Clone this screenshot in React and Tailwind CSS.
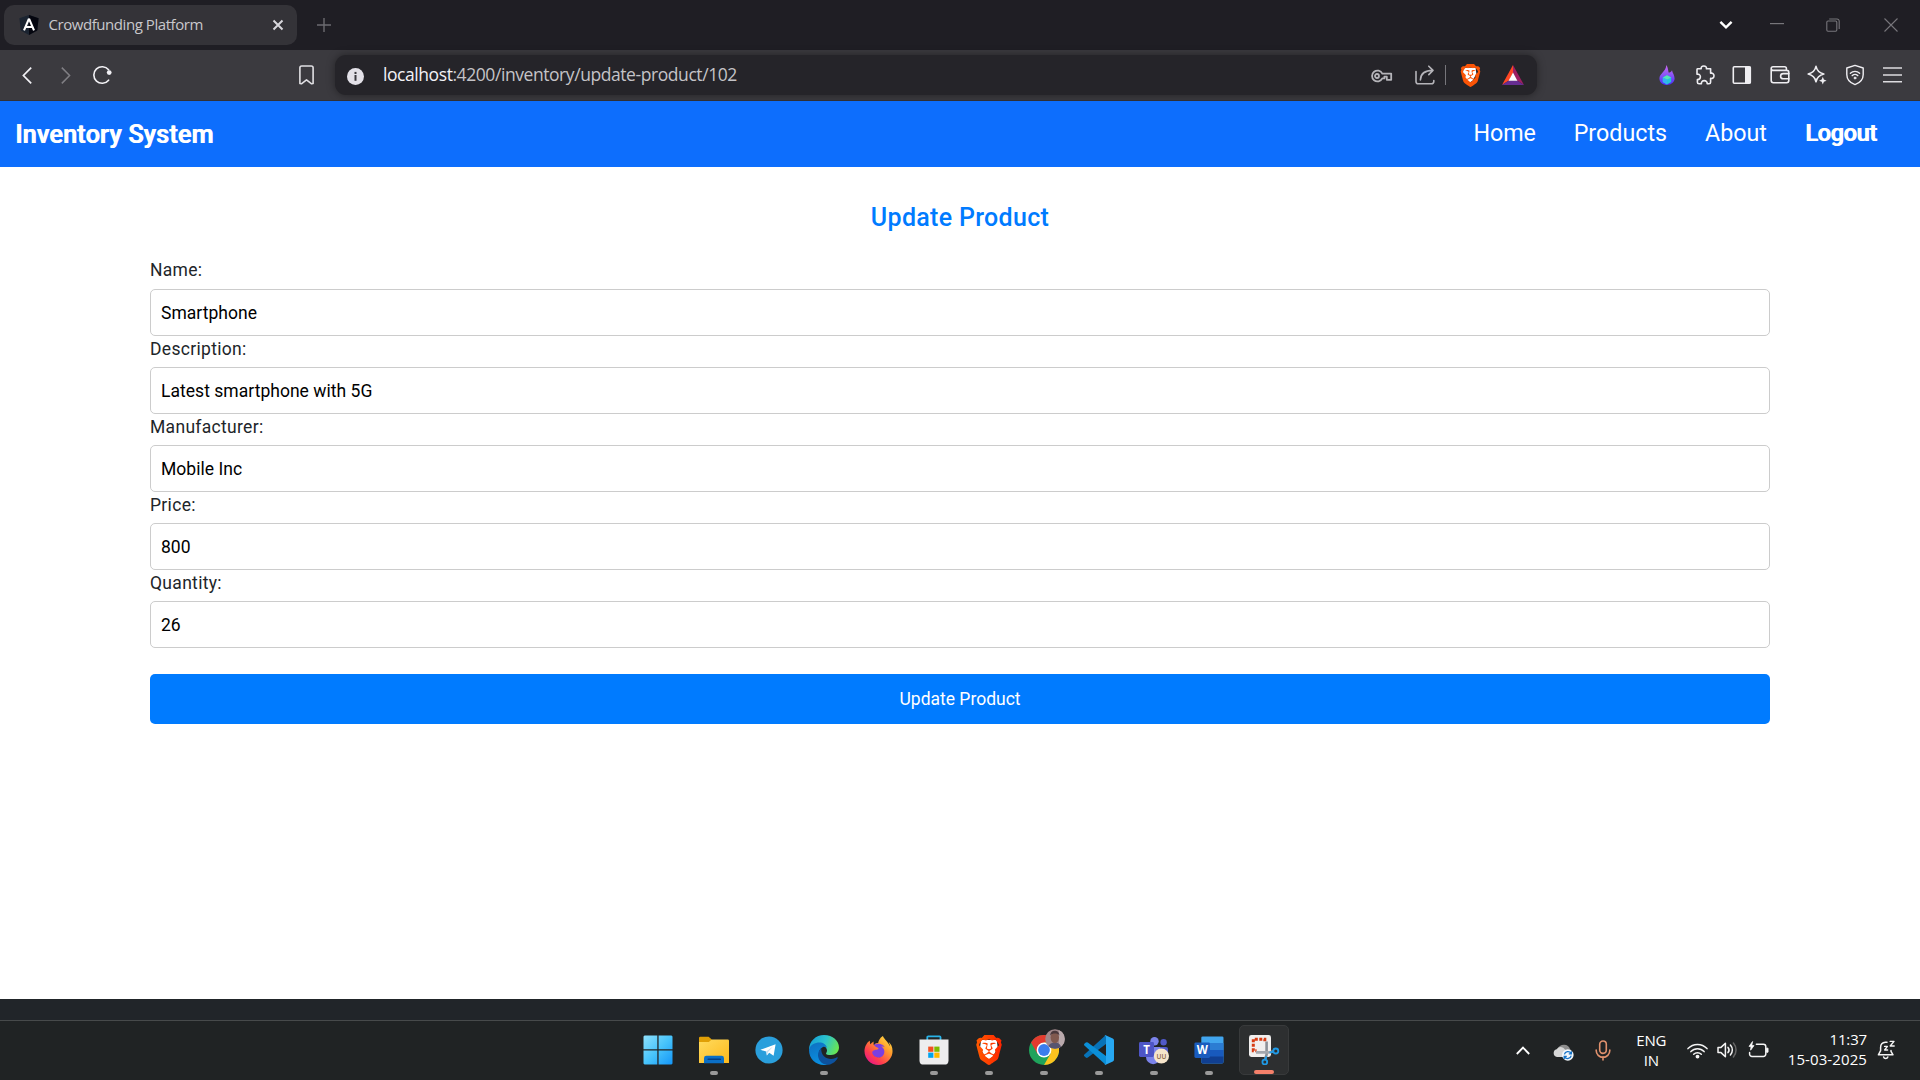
import React from "react";
import { SiBrave, SiFirefoxbrowser } from "react-icons/si";

const FIELDS = [
  { id: "name", label: "Name:", value: "Smartphone" },
  { id: "description", label: "Description:", value: "Latest smartphone with 5G" },
  { id: "manufacturer", label: "Manufacturer:", value: "Mobile Inc" },
  { id: "price", label: "Price:", value: "800" },
  { id: "quantity", label: "Quantity:", value: "26" },
];

/* ---------- Browser chrome ---------- */

function AngularMark() {
  return (
    <svg width="20" height="20" viewBox="0 0 20 20">
      <path d="M10 0 19.6 3.2 18.2 15.6 10 20 1.8 15.6 0.4 3.2Z" fill="#1b2431" />
      <path d="M10 0 19.6 3.2 18.2 15.6 10 20Z" fill="#05060f" />
      <path d="M10 3.6 5 15.4M10 3.6 15 15.4M6.6 12h6.8" stroke="#fff" strokeWidth="2.1" fill="none" />
    </svg>
  );
}

function TabStrip() {
  return (
    <div className="flex h-[50px] items-center bg-[#1f1e24] pl-1">
      <div className="flex h-10 w-[293px] items-center rounded-[10px] bg-[#343338] pl-[15px] pr-[13px]">
        <AngularMark />
        <span className="ml-[9.5px] mt-[-2px] flex-1 whitespace-nowrap font-['Open_Sans',sans-serif] text-[15px] leading-5 tracking-[-0.44px] text-[#c9c8cc]">
          Crowdfunding Platform
        </span>
        <svg width="12" height="12" viewBox="0 0 12 12" stroke="#d8d7dc" strokeWidth="2" fill="none">
          <path d="M1.5 1.5 10.5 10.5M10.5 1.5 1.5 10.5" />
        </svg>
      </div>
      <svg className="ml-5" width="14" height="14" viewBox="0 0 14 14" stroke="#6c6b70" strokeWidth="1.4">
        <path d="M7 0V14M0 7H14" />
      </svg>
      <div className="ml-auto flex items-center">
        <svg className="mr-[37px]" width="14" height="10" viewBox="0 0 14 10" fill="none" stroke="#fff" strokeWidth="2.4">
          <path d="M1.4 1.8 7 7.4 12.6 1.8" />
        </svg>
        <svg className="mr-[42px]" width="14" height="14" viewBox="0 0 14 14" stroke="#77767b" strokeWidth="1.2">
          <path d="M0 5.6H14" />
        </svg>
        <svg className="mr-[44px]" width="14" height="14" viewBox="0 0 14 14" fill="none" stroke="#77767b" strokeWidth="1.1">
          <rect x="0.8" y="3" width="10" height="10.2" rx="1.2" />
          <path d="M3.2 1H11a2.2 2.2 0 0 1 2.2 2.2V11" />
        </svg>
        <svg className="mr-[22px]" width="14" height="14" viewBox="0 0 14 14" stroke="#77767b" strokeWidth="1.1">
          <path d="M0.5 0.5 13.5 13.5M13.5 0.5 0.5 13.5" />
        </svg>
      </div>
    </div>
  );
}

function BraveLion({ size, gradient }) {
  return (
    <div className="relative flex items-center justify-center">
      <svg className="absolute" width={size * 0.66} height={size * 0.72} viewBox="0 0 20 22">
        <path d="M2 1H18L19 9 14 18 10 21 6 18 1 9Z" fill="#fff" />
      </svg>
      <svg className="absolute" width="0" height="0">
        <defs>
          <linearGradient id="brave-fill" x1="0" x2="1" y1="0" y2="0">
            <stop offset="0" stopColor="#ff5a00" />
            <stop offset="1" stopColor="#ff2400" />
          </linearGradient>
        </defs>
      </svg>
      <SiBrave size={size} className="relative" fill={gradient ? "url(#brave-fill)" : "#fb5406"} />
    </div>
  );
}

function AddressBar() {
  return (
    <div className="flex h-10 w-[1202px] items-center rounded-[11px] bg-[#252429] pl-3 pr-[13px] shadow-[0_0_8px_rgba(0,0,0,0.4)]">
      <svg className="mt-0.5" width="17" height="17" viewBox="0 0 17 17">
        <circle cx="8.5" cy="8.5" r="8.5" fill="#e3e1e8" />
        <rect x="7.5" y="3.9" width="2" height="2.1" fill="#3a393e" />
        <rect x="7.5" y="7" width="2" height="5.8" fill="#3a393e" />
      </svg>
      <span className="ml-[19px] mt-[-2px] whitespace-nowrap font-['Open_Sans',sans-serif] text-[17.5px] leading-6 tracking-[-0.43px] text-[#c4c3c7]">
        <span className="text-[#f3f2f6]">localhost</span>:4200/inventory/update-product/102
      </span>
      <svg className="ml-auto mt-[1px]" width="22" height="14" viewBox="0 0 22 14" fill="none" stroke="#b5b4b9" strokeWidth="1.8">
        <path d="M11.3 4.6A5.4 5.4 0 1 0 11.3 9.4H13.4V7.6H15.8V10.8H20.2V4.6Z" strokeLinejoin="round" />
        <circle cx="6" cy="7" r="2" />
      </svg>
      <svg className="ml-[22px]" width="20" height="20" viewBox="0 0 20 20" fill="none" stroke="#b5b4b9" strokeWidth="1.6" strokeLinecap="round" strokeLinejoin="round">
        <path d="M1 6.5V16.5a2.3 2.3 0 0 0 2.3 2.3H16.6a2.2 2.2 0 0 0 2.2-2.2V15.6" />
        <path d="M5.4 15C5.6 8.6 10 5.4 18 5.4M13.8 1.2 18 5.4 13.8 9.6" />
      </svg>
      <div className="ml-[10px] h-5 w-px bg-[#77767b]" />
      <div className="ml-[12px] flex w-6 justify-center">
        <BraveLion size={23} />
      </div>
      <svg className="ml-[20px]" width="22" height="20" viewBox="0 0 22 20">
        <path d="M11 0 0 20 7.2 15.2 11 8Z" fill="#ff4724" />
        <path d="M11 0 22 20 14.8 15.2 11 8Z" fill="#9e1f63" />
        <path d="M0 20H22L14.8 15.2H7.2Z" fill="#662d91" />
        <path d="M11 7.4 15.4 15.8H6.6Z" fill="#fff" />
      </svg>
    </div>
  );
}

function ExtensionIcons() {
  const line = { fill: "none", stroke: "#efeef2", strokeWidth: 1.6, strokeLinecap: "round", strokeLinejoin: "round" };
  const cell = "flex w-[37.5px] justify-center";
  return (
    <div className="ml-auto mr-[9px] flex items-center">
      <div className={cell}>
        <svg width="16" height="20" viewBox="0 0 16 20">
          <defs>
            <linearGradient id="flame" x1="0" x2="0" y1="0" y2="1">
              <stop offset="0" stopColor="#cc66f2" />
              <stop offset="0.5" stopColor="#8a55f6" />
              <stop offset="1" stopColor="#4b2cf5" />
            </linearGradient>
          </defs>
          <path d="M7.4 0C8.6 2 9 3.6 9.6 7.6 11 7.5 12.4 6.6 13 5.2 13.4 7.8 15.6 10 15.6 13.6 15.6 17.2 12.2 20 8 20S0.4 17.2 0.4 13.4C0.4 8.8 6.6 7 7.4 0Z" fill="url(#flame)" />
          <path d="M8 10.2 12.2 12.4V17L8 19.4 3.8 17V12.4Z" fill="#25c4d8" />
          <path d="M8 10.2 12.2 12.4 8 14.6 3.8 12.4Z" fill="#55e6b4" />
          <path d="M8 14.6V19.4L3.8 17V12.4Z" fill="#35b1f4" />
        </svg>
      </div>
      <div className={cell}>
        <svg width="20" height="20" viewBox="0 0 20 20" {...line}>
          <path d="M2.4 3.8H6.2C5.8 2.2 6.9 1 8.8 1S11.8 2.2 11.4 3.8H15.6V8.2C17.4 7.8 19 8.8 19 10.8S17.4 13.8 15.6 13.4V17.2Q15.6 18.8 14 18.8H12.2C12.4 16.8 11 15.6 9.2 15.6S6.2 16.8 6.4 18.8H4Q2.4 18.8 2.4 17.2V14.6C4.4 14.6 5.4 13.4 5.4 11.8S4.2 8.8 2 9.2V4.6Q2 3.8 2.4 3.8Z" />
        </svg>
      </div>
      <div className={cell}>
        <svg width="20" height="20" viewBox="0 0 20 20">
          <rect x="1.3" y="1.8" width="17" height="16.4" rx="1" {...line} />
          <rect x="13" y="1.8" width="6" height="16.4" fill="#efeef2" />
        </svg>
      </div>
      <div className={cell}>
        <svg width="20" height="20" viewBox="0 0 20 20" {...line}>
          <path d="M1.2 3.4V15.6A2.2 2.2 0 0 0 3.4 17.8H16.6A2.2 2.2 0 0 0 18.8 15.6V7.4A2 2 0 0 0 16.8 5.4H3A1.8 1.8 0 0 1 3 1.8H14.6A1.8 1.8 0 0 1 16.4 3.6V5.4" />
          <path d="M18.8 8.6H13.2A2.6 2.6 0 0 0 13.2 13.8H18.8" />
        </svg>
      </div>
      <div className={cell}>
        <svg width="20" height="20" viewBox="0 0 20 20" {...line}>
          <path d="M9 1.4C9.9 5.6 12 7.9 16.8 9 12 10.1 9.9 12.4 9 16.8 8.1 12.4 6 10.1 1.2 9 6 7.9 8.1 5.6 9 1.4Z" />
          <path d="M15.8 11.8 16.9 14.6 19.6 15.7 16.9 16.8 15.8 19.6 14.7 16.8 12 15.7 14.7 14.6Z" fill="#efeef2" stroke="none" />
        </svg>
      </div>
      <div className={cell}>
        <svg width="20" height="22" viewBox="0 0 20 22" {...line} strokeWidth="1.4">
          <path d="M10 1.4 18.2 4V10.4C18.2 15.8 14.8 18.8 10 20.6 5.2 18.8 1.8 15.8 1.8 10.4V4Z" />
          <path d="M5.4 9.2C8 6.8 12 6.8 14.6 9.2M7.2 11.6C8.8 10.2 11.2 10.2 12.8 11.6" />
          <circle cx="10" cy="14" r="1" fill="#efeef2" strokeWidth="0.8" />
        </svg>
      </div>
      <div className={cell}>
        <svg width="19" height="16" viewBox="0 0 19 16" stroke="#dddce0" strokeWidth="1.6">
          <path d="M0 1H19M0 8H19M0 14.8H19" />
        </svg>
      </div>
    </div>
  );
}

function Toolbar() {
  return (
    <div className="flex h-[51px] items-center border-b border-[#323136] bg-[#3b3a3f] pl-[22px]">
      <svg width="10" height="17" viewBox="0 0 10 17" fill="none" stroke="#f1f0f4" strokeWidth="1.7">
        <path d="M9.2 0.6 1.4 8.5 9.2 16.4" />
      </svg>
      <svg className="ml-[29px]" width="10" height="17" viewBox="0 0 10 17" fill="none" stroke="#807f84" strokeWidth="1.5">
        <path d="M0.8 0.6 8.6 8.5 0.8 16.4" />
      </svg>
      <svg className="ml-[21px]" width="20" height="20" viewBox="0 0 20 20" fill="none" stroke="#f1f0f4" strokeWidth="1.6" strokeLinecap="round">
        <path d="M16.6 4.8A8.3 8.3 0 1 0 16.6 15.2" />
        <circle cx="17.2" cy="7.6" r="2.4" fill="#f1f0f4" stroke="none" />
      </svg>
      <svg className="ml-[187px]" width="15" height="20" viewBox="0 0 15 20" fill="none" stroke="#e0dfe3" strokeWidth="1.6" strokeLinejoin="round">
        <path d="M0.9 18.4V2.8A1.8 1.8 0 0 1 2.7 1H12.3A1.8 1.8 0 0 1 14.1 2.8V18.4L12.6 18.8 7.5 14.8 2.4 18.8Z" />
      </svg>
      <div className="ml-[21px] flex">
        <AddressBar />
      </div>
      <ExtensionIcons />
    </div>
  );
}

/* ---------- Web page ---------- */

function Navbar() {
  return (
    <nav className="flex h-[66px] items-center bg-[#0d6efd] pl-[15px] pr-[43.5px] text-[23.25px] text-white">
      <span className="mt-[2px] text-[25px] font-medium leading-8 tracking-[0.26px] [text-shadow:1px_0_0_#fff]">Inventory System</span>
      <div className="ml-auto flex items-center gap-[38px] pb-[1px]">
        <a className="tracking-[-0.1px]">Home</a>
        <a>Products</a>
        <a>About</a>
        <a className="font-medium tracking-[-0.2px] [text-shadow:1px_0_0_#fff]">Logout</a>
      </div>
    </nav>
  );
}

function ProductForm() {
  return (
    <main className="flex h-[832px] flex-col bg-white px-[150px] pt-[31px]">
      <h2 className="h-[40px] text-center text-[25px] font-medium leading-[40px] tracking-[0.31px] text-[#007bff]">Update Product</h2>
      <form className="mt-[19.4px] flex flex-col">
        {FIELDS.map((field) => (
          <div key={field.id} className="flex h-[78.2px] flex-col">
            <label htmlFor={field.id} className="h-[31.3px] text-[17.5px] leading-[26px] tracking-[0.31px] text-[#212529]">
              {field.label}
            </label>
            <input
              id={field.id}
              defaultValue={field.value}
              className="h-[47px] w-full shrink-0 rounded-[5px] border border-[#ccc] bg-white px-[10px] pt-[1px] text-[17.5px] tracking-[0.03px] text-black outline-none"
            />
          </div>
        ))}
        <button type="button" className="mt-[25.6px] h-[50px] rounded-[5px] bg-[#007bff] text-[17.5px] text-white">
          Update Product
        </button>
      </form>
    </main>
  );
}

/* ---------- Taskbar ---------- */

function WindowsIcon() {
  return (
    <svg width="30" height="30" viewBox="0 0 30 30">
      <defs>
        <linearGradient id="win" x1="0" y1="0" x2="1" y2="1" gradientUnits="objectBoundingBox">
          <stop offset="0" stopColor="#8fe0fb" />
          <stop offset="0.5" stopColor="#48c4fb" />
          <stop offset="1" stopColor="#1496f8" />
        </linearGradient>
      </defs>
      <path d="M1.5 0.5H14.3V14.3H0.5V1.5ZM15.6 0.5H28.5L29.5 1.5V14.3H15.6ZM0.5 15.6H14.3V29.5H1.5L0.5 28.5ZM15.6 15.6H29.5V28.5L28.5 29.5H15.6Z" fill="url(#win)" />
    </svg>
  );
}

function FolderIcon() {
  return (
    <svg width="30" height="30" viewBox="0 0 30 30">
      <defs>
        <linearGradient id="folder" x1="0" y1="0" x2="1" y2="1">
          <stop offset="0" stopColor="#ffdb5e" />
          <stop offset="1" stopColor="#fdb91c" />
        </linearGradient>
      </defs>
      <path d="M0 3Q0 1.8 1.2 1.8H9.6L12.8 4.6V9H0Z" fill="#e09f06" />
      <path d="M0 7H9.8L12.8 4.6H28.8Q30 4.6 30 5.8V28H0Z" fill="url(#folder)" />
      <path d="M5 28.2V23.2Q5 20.8 7.4 20.8H22.6Q25 20.8 25 23.2V28.2Z" fill="#0b6fc6" />
      <rect x="8.5" y="23.6" width="13.5" height="1.5" rx="0.7" fill="#053f83" />
    </svg>
  );
}

function TelegramIcon() {
  return (
    <svg width="28" height="28" viewBox="0 0 28 28">
      <circle cx="14" cy="14" r="13.6" fill="#2a9fdc" />
      <path d="M5.4 13.8 20.6 8.3 18.6 19.8 14.2 16.8 11.9 19.6 11.2 15.6Z" fill="#fff" />
      <path d="M11.2 15.6 18 10.6 12.9 16.3 11.9 19.6Z" fill="#c5dff0" />
    </svg>
  );
}

function EdgeIcon() {
  return (
    <svg width="30" height="30" viewBox="0 0 30 30">
      <defs>
        <linearGradient id="edge-top" x1="0" y1="0.3" x2="1" y2="0.6">
          <stop offset="0" stopColor="#149fd8" />
          <stop offset="0.5" stopColor="#2cc3cc" />
          <stop offset="1" stopColor="#6be64f" />
        </linearGradient>
        <linearGradient id="edge-left" x1="0" y1="0" x2="0.4" y2="1">
          <stop offset="0" stopColor="#0f6fc0" />
          <stop offset="1" stopColor="#0a8fe0" />
        </linearGradient>
      </defs>
      <path d="M0 15C0 6 7 0 15 0 24 0 30 6 30 12.5 30 17 26.5 20 22 20 19 20 17 19.3 17 18.4 17 18 18 17.2 18 15.5 18 12.5 15 10 11 10 6 10 1.5 12.5 0 15" fill="url(#edge-top)" />
      <path d="M0 15C1 9.5 6 7.5 10.5 7.5 14 7.5 17.5 9.5 18 13 17 12 15.5 11.5 14 12 10.5 13.5 10 17 10 19 10 25 15 29.5 19 29.5 17.8 29.9 16.4 30 15 30 6.5 30 0 23.5 0 15" fill="url(#edge-left)" />
      <path d="M12.3 13.2C11.6 20 17 24 22 24 25 24 27 23 28 22.3 28.6 22 29 22.5 28.6 23.2 26 27.5 22 30 17.5 29.8 12 29 9 24 9 20 9 17 10.5 14.5 12.3 13.2" fill="#0d529e" />
    </svg>
  );
}

function FirefoxIcon() {
  return (
    <div className="relative flex items-center justify-center">
      <svg className="absolute" width="0" height="0">
        <defs>
          <linearGradient id="fox" x1="1" y1="0" x2="0.2" y2="1">
            <stop offset="0" stopColor="#fff04a" />
            <stop offset="0.4" stopColor="#ff9a2c" />
            <stop offset="0.75" stopColor="#ff3d4e" />
            <stop offset="1" stopColor="#e6148a" />
          </linearGradient>
        </defs>
      </svg>
      <div className="absolute h-[15px] w-[15px] rounded-full bg-[#7b3fe0]" />
      <SiFirefoxbrowser size={29} className="relative" fill="url(#fox)" />
    </div>
  );
}

function StoreIcon() {
  return (
    <svg width="30" height="30" viewBox="0 0 30 30">
      <path d="M8.3 5.5V2.2Q8.3 1.3 9.2 1.3H20.6Q21.5 1.3 21.5 2.2V5.5" fill="none" stroke="#29b3e8" strokeWidth="1.8" />
      <path d="M0.5 4.6H29.5V25.4Q29.5 29.6 25.3 29.6H4.7Q0.5 29.6 0.5 25.4Z" fill="#ededee" />
      <rect x="9.2" y="11.6" width="5.2" height="5.2" fill="#f25022" />
      <rect x="15.3" y="11.6" width="5.2" height="5.2" fill="#7fba00" />
      <rect x="9.2" y="17.6" width="5.2" height="5.2" fill="#00a4ef" />
      <rect x="15.3" y="17.6" width="5.2" height="5.2" fill="#ffb900" />
    </svg>
  );
}

function ChromeIcon() {
  return (
    <div className="relative">
      <svg className="block" width="30" height="30" viewBox="0 0 30 30">
        <circle cx="15" cy="15" r="15" fill="#1fa35b" />
        <path d="M15 15 2 7.5A15 15 0 0 1 28 7.5H15Z" fill="#e33b2e" />
        <path d="M15 7.5H28A15 15 0 0 1 15 30L21.5 18.7Z" fill="#fcc31e" />
        <path d="M2 7.5 8.5 18.8 15 15 15 7.5Z" fill="#e33b2e" />
        <circle cx="15" cy="15" r="7.4" fill="#fff" />
        <circle cx="15" cy="15" r="5.9" fill="#3b7ded" />
      </svg>
      <svg className="absolute -top-[6px] left-[16px]" width="20" height="20" viewBox="0 0 20 20">
        <defs>
          <clipPath id="avatar">
            <circle cx="10" cy="10" r="9.8" />
          </clipPath>
        </defs>
        <g clipPath="url(#avatar)">
          <rect width="20" height="20" fill="#a0878a" />
          <rect x="14" width="6" height="20" fill="#b9a9ac" />
          <path d="M3 20C3 14.6 7 13.4 10 13.4S16 15 16.5 20Z" fill="#565470" />
          <ellipse cx="9.8" cy="8.6" rx="4.2" ry="5.6" fill="#80594f" />
          <path d="M5.2 6.4C5.4 3 7.5 1.8 9.8 1.8S14.2 3 14.4 6.4C12.5 4 7.5 4 5.2 6.4Z" fill="#4a393d" />
        </g>
      </svg>
    </div>
  );
}

function CodeIcon() {
  return (
    <svg width="30" height="30" viewBox="0 0 30 30">
      <path d="M21.6 0.3 24 2.6 22 9 3.8 22.6Q2.8 23.4 1.8 22.6L0.4 21.3Q-0.5 20.4 0.4 19.5Z" fill="#0873b8" />
      <path d="M0.4 8.8 1.8 7.5Q2.8 6.8 3.8 7.5L22 21 24 27 21.6 29.7 0.4 10.6Q-0.4 9.7 0.4 8.8Z" fill="#0b8fd8" />
      <path d="M21.6 0.2 28.8 3.4Q30 4 30 5.4V24.6Q30 26 28.8 26.6L21.6 29.8Q20.8 30 20.4 29.4 22 29.6 22 27.8V2.2Q22 0.6 20.4 0.6 20.8 0 21.6 0.2Z" fill="#27a8f2" />
    </svg>
  );
}

function TeamsIcon() {
  return (
    <svg width="32" height="30" viewBox="0 0 32 30">
      <circle cx="16.5" cy="6.2" r="4.2" fill="#7b83eb" />
      <circle cx="25.6" cy="7.2" r="3.2" fill="#5059c9" />
      <rect x="21" y="12" width="9" height="12" rx="2" fill="#5059c9" />
      <path d="M8 12H22.4V22A7.2 7.2 0 0 1 8 22Z" fill="#7b83eb" />
      <rect x="1" y="7" width="15" height="15" rx="1.4" fill="#4e55c6" />
      <text x="8.5" y="18.6" textAnchor="middle" fontSize="11.5" fontWeight="700" fill="#fff" className="font-['Open_Sans',sans-serif]">T</text>
      <circle cx="23.4" cy="21" r="7.6" fill="#f6e5cb" />
      <text x="23.4" y="23.6" textAnchor="middle" fontSize="6.5" fontWeight="600" fill="#8a6444" className="font-['Open_Sans',sans-serif]">UU</text>
    </svg>
  );
}

function WordIcon() {
  return (
    <svg width="30" height="30" viewBox="0 0 30 30">
      <rect x="7.3" y="1.4" width="22.2" height="27" rx="1.4" fill="#41a5ee" />
      <rect x="7.3" y="8" width="22.2" height="7" fill="#2b7cd3" />
      <rect x="7.3" y="15" width="22.2" height="7" fill="#185abd" />
      <path d="M7.3 21.6H29.5V27Q29.5 28.4 28.1 28.4H8.7Q7.3 28.4 7.3 27Z" fill="#103f91" />
      <rect x="0.4" y="7.4" width="15.6" height="15.6" rx="1.4" fill="#1a5cbe" />
      <text x="8.2" y="19.2" textAnchor="middle" fontSize="11.5" fontWeight="700" fill="#fff" className="font-['Open_Sans',sans-serif]">W</text>
    </svg>
  );
}

function SnippingIcon() {
  return (
    <svg width="32" height="30" viewBox="0 0 32 30">
      <rect x="1" y="0" width="22" height="22" rx="2.4" fill="#f1efee" />
      <path d="M16.8 6.3V4.3H5.3V15.8H8.6" fill="none" stroke="#d83b12" strokeWidth="3" strokeDasharray="3 1.5" />
      <path d="M18.6 6.5V19.6L17.2 24" fill="none" stroke="#8b9097" strokeWidth="2.6" />
      <path d="M8 17.4H20.6L25.6 16.4" fill="none" stroke="#a4a8ae" strokeWidth="2.6" />
      <circle cx="27.8" cy="16" r="2.5" fill="none" stroke="#1f9ae6" strokeWidth="1.8" />
      <circle cx="16.8" cy="27" r="2.4" fill="none" stroke="#1f9ae6" strokeWidth="1.8" />
      <path d="M21.6 17.6 25.6 16.4M18.4 21.4 17.4 24.4" stroke="#1f9ae6" strokeWidth="1.8" />
    </svg>
  );
}

const APPS = [
  { name: "explorer", icon: <FolderIcon />, open: true },
  { name: "telegram", icon: <TelegramIcon />, open: false },
  { name: "edge", icon: <EdgeIcon />, open: true },
  { name: "firefox", icon: <FirefoxIcon />, open: false },
  { name: "store", icon: <StoreIcon />, open: true },
  { name: "brave", icon: <BraveLion size={30} gradient />, open: true },
  { name: "chrome", icon: <ChromeIcon />, open: true },
  { name: "code", icon: <CodeIcon />, open: true },
  { name: "teams", icon: <TeamsIcon />, open: true },
  { name: "word", icon: <WordIcon />, open: true },
];

function Tray() {
  const line = { fill: "none", stroke: "#f4f4f4", strokeWidth: 1.5, strokeLinecap: "round", strokeLinejoin: "round" };
  return (
    <div className="ml-auto flex items-center pr-[24.5px] font-['Open_Sans',sans-serif] text-[15px] leading-5 text-white">
      <svg width="14" height="9" viewBox="0 0 14 9" fill="none" stroke="#fff" strokeWidth="1.8">
        <path d="M0.8 8 7 1.6 13.2 8" />
      </svg>
      <svg className="ml-[23px] mt-1" width="21" height="18" viewBox="0 0 21 18">
        <path d="M5 5.4A6.4 6 0 0 1 17 6 4 4 0 0 1 16 13H8Z" fill="#8d8d8d" />
        <path d="M4 14A4 4 0 0 1 3.6 6.2 5 5 0 0 1 12 6.4L15 9.4 12 14Z" fill="#d6d6d6" />
        <circle cx="14.8" cy="12" r="5.8" fill="#f2f7fb" />
        <path d="M11.4 11.4A3.6 3.6 0 0 1 18 10.4M18.2 12.6A3.6 3.6 0 0 1 11.6 13.8M18.4 8.2V10.8H15.8M11.2 16V13.3H13.8" fill="none" stroke="#1573c8" strokeWidth="1.3" />
      </svg>
      <svg className="ml-[21.5px]" width="16" height="21" viewBox="0 0 16 21" fill="none" stroke="#e0916d" strokeWidth="1.6" strokeLinecap="round">
        <rect x="4.7" y="1" width="6.6" height="12.4" rx="3.3" />
        <path d="M1.2 10V10.6A6.2 6.2 0 0 0 14.8 10.6V10M8 16.8V20" />
      </svg>
      <div className="ml-[24px] mt-[-1px] flex w-[32px] flex-col items-center tracking-[-0.2px]">
        <span>ENG</span>
        <span>IN</span>
      </div>
      <svg className="ml-[20px]" width="21" height="17" viewBox="0 0 21 17" {...line}>
        <path d="M1 6.6A13.2 13.2 0 0 1 20 6.6M3.9 9.6A9 9 0 0 1 17.1 9.6M6.7 12.3A5.2 5.2 0 0 1 14.3 12.3" />
        <circle cx="10.5" cy="14.6" r="1.2" fill="#fff" />
      </svg>
      <svg className="ml-[9px]" width="21" height="18" viewBox="0 0 21 18" {...line}>
        <path d="M1 6.4H4L8.4 2.2V15.8L4 11.6H1Z" />
        <path d="M11 6.4A4 4 0 0 1 11 11.6M13.4 4A7.4 7.4 0 0 1 13.4 14" />
        <path d="M16.4 2A10.6 10.6 0 0 1 16.4 16" stroke="#666" />
      </svg>
      <svg className="ml-[9.5px]" width="21" height="18" viewBox="0 0 21 18" {...line}>
        <path d="M8.4 3.2H15.4A2.4 2.4 0 0 1 17.8 5.6V13A2.4 2.4 0 0 1 15.4 15.4H4A2.4 2.4 0 0 1 1.6 13V11.6" />
        <path d="M18.8 7.2H20V11.2H18.8Z" fill="#fff" strokeWidth="1" />
        <path d="M4.4 0.8 1 5.4H3L2.6 9.2 6 4.6H4Z" fill="#fff" strokeWidth="0.8" />
      </svg>
      <div className="ml-[19px] mt-[-3px] flex flex-col items-end tracking-[0.1px]">
        <span className="tracking-[-0.15px]">11:37</span>
        <span>15-03-2025</span>
      </div>
      <svg className="ml-[9.5px]" width="19" height="20" viewBox="0 0 19 20" {...line}>
        <path d="M10 2.2H8.4C5.4 2.4 3.6 4.4 3.6 7.4V10.6L1.4 14.8H16L14 11.4V10.4M6.6 17A2.2 2.2 0 0 0 10.8 17" />
        <path d="M7.6 6.4H10.4L7.6 10H10.6M13.2 1.4H17L13.2 6H17.2" strokeWidth="1.4" />
      </svg>
    </div>
  );
}

function Taskbar() {
  return (
    <div className="flex h-[60px] items-center border-t border-[#474a4b] bg-[#202324] pb-[1px] pl-[629px]">
      <div className="flex w-[57px] justify-center">
        <WindowsIcon />
      </div>
      {APPS.map((app) => (
        <div key={app.name} className="relative flex h-[50px] w-[55px] items-center justify-center">
          {app.icon}
          {app.open && <div className="absolute bottom-0 h-1 w-2 rounded-full bg-[#9a9a9a]" />}
        </div>
      ))}
      <div className="relative ml-[3px] flex h-[50px] w-[50px] items-center justify-center rounded-[5px] border border-[#383a3b] bg-[#2d2f30]">
        <SnippingIcon />
        <div className="absolute bottom-0 h-1 w-5 rounded-full bg-[#f4806a]" />
      </div>
      <Tray />
    </div>
  );
}

export default function App() {
  return (
    <div className="flex h-[1080px] w-[1920px] flex-col overflow-hidden bg-white font-['Roboto',sans-serif]">
      <TabStrip />
      <Toolbar />
      <Navbar />
      <ProductForm />
      <footer className="h-[21px] bg-[#212529]" />
      <Taskbar />
    </div>
  );
}
